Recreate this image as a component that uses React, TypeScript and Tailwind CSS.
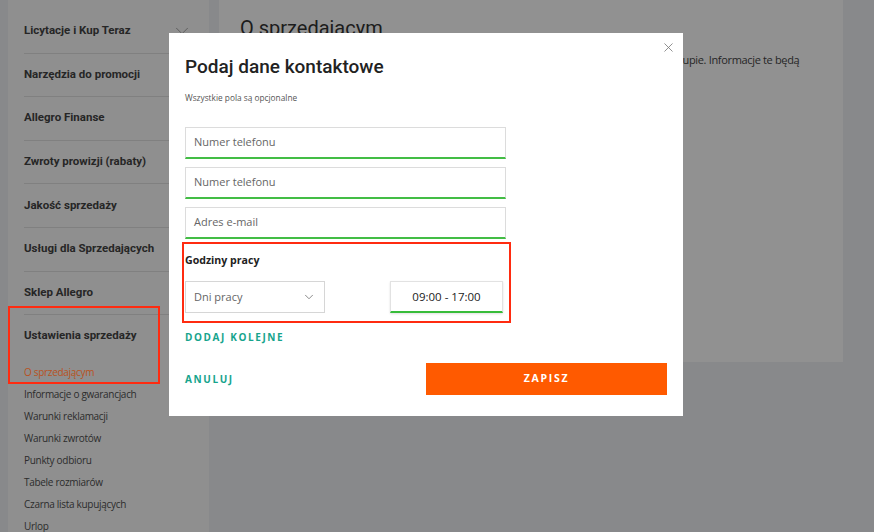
import { ChevronDown, X } from 'lucide-react';

const sections = [
  'Licytacje i Kup Teraz',
  'Narzędzia do promocji',
  'Allegro Finanse',
  'Zwroty prowizji (rabaty)',
  'Jakość sprzedaży',
  'Usługi dla Sprzedających',
  'Sklep Allegro',
];

const subLinks = [
  'Informacje o gwarancjach',
  'Warunki reklamacji',
  'Warunki zwrotów',
  'Punkty odbioru',
  'Tabele rozmiarów',
  'Czarna lista kupujących',
  'Urlop',
];

function Field({ placeholder }: { placeholder: string }) {
  return (
    <div className="h-[32px] border border-[#dcdcdc] border-b-2 border-b-[#43bd45] flex items-center px-[8px] text-[11px] text-[#666]">
      {placeholder}
    </div>
  );
}

export default function App() {
  return (
    <div
      className="relative w-[874px] h-[532px] overflow-hidden bg-[#88898b] flex items-start"
      style={{ fontFamily: '"Open Sans", sans-serif' }}
    >
      {/* sidebar */}
      <aside className="ml-2 w-[201px] h-[532px] bg-[#8f8f8f] px-4 pt-[10px] flex flex-col">
        {sections.map((s, i) => (
          <div
            key={s}
            className="h-[43.6px] shrink-0 border-b border-[#808080] flex items-center justify-between pb-[1px]"
          >
            <span className="font-['Roboto'] font-bold text-[11.5px] text-[#262626]">{s}</span>
            {i === 0 && <ChevronDown className="w-[22px] h-[22px] text-[#5a5a5a]" strokeWidth={1} />}
          </div>
        ))}
        <div className="h-[46px] shrink-0 flex items-center pb-[5px]">
          <span className="font-['Roboto'] font-bold text-[11.5px] text-[#262626]">Ustawienia sprzedaży</span>
        </div>
        <div className="flex flex-col tracking-[-0.3px]">
          <div className="h-[22px] flex items-center text-[10px] text-[#b8521e]">O sprzedającym</div>
          {subLinks.map((l) => (
            <div key={l} className="h-[22px] flex items-center text-[10px] text-[#2c2c2c]">
              {l}
            </div>
          ))}
        </div>
      </aside>

      {/* main panel */}
      <main className="ml-[10px] w-[624px] h-[362px] bg-[#919191] pl-[21px] pt-[14px]">
        <h2 className="font-['Roboto'] text-[20px] leading-[28px] text-[#1c1c1c]">O sprzedającym</h2>
        <p className="mt-[10px] text-[11px] tracking-[-0.335px] whitespace-nowrap text-[#262626]">
          Podaj tutaj dane kontaktowe, które kupujący zobaczy już w zakładce na swojej stronie po zakupie. Informacje te będą
        </p>
      </main>

      {/* annotation on sidebar */}
      <div className="absolute left-[8px] top-[306px] w-[152px] h-[78px] border-2 border-[#ff2b10]" />

      {/* modal */}
      <div className="absolute left-[169px] top-[33px] w-[514px] h-[383px] bg-white px-4 pt-[22px]">
        <button className="absolute right-[7px] top-[7px] text-[#777]">
          <X className="w-[15px] h-[15px]" strokeWidth={1.3} />
        </button>
        <h1 className="font-['Roboto'] font-medium text-[19px] leading-[24px] text-[#222]">
          Podaj dane kontaktowe
        </h1>
        <p className="mt-[14px] text-[8.3px] leading-[10px] text-[#555]">Wszystkie pola są opcjonalne</p>

        <div className="mt-[24px] w-[321px] flex flex-col gap-[8px]">
          <Field placeholder="Numer telefonu" />
          <Field placeholder="Numer telefonu" />
          <Field placeholder="Adres e-mail" />
        </div>

        <div className="relative mt-[3px] w-[321px] pt-[11px]">
          <div className="absolute -left-[3px] top-0 w-[329px] h-[81px] border-2 border-[#ff2b10]" />
          <div className="text-[10.6px] font-bold text-[#222] leading-[14px]">Godziny pracy</div>
          <div className="mt-[14px] flex justify-between pr-[3px]">
            <div className="w-[140px] h-[32px] border border-[#d6d6d6] flex items-center justify-between px-[8px] text-[11px] text-[#666]">
              Dni pracy
              <ChevronDown className="w-[14px] h-[14px] text-[#666]" strokeWidth={1.3} />
            </div>
            <div className="w-[113px] h-[32px] border border-[#e2e2e2] border-b-2 border-b-[#37bc3a] shadow-[0_1px_2px_rgba(0,0,0,0.12)] flex items-center justify-center text-[11.5px] text-[#222]">
              09:00 - 17:00
            </div>
          </div>
        </div>

        <div className="mt-[17px] text-[10px] font-bold tracking-[0.16em] text-[#16a48d] leading-[14px]">
          DODAJ KOLEJNE
        </div>

        <div className="mt-[19px] flex items-center justify-between">
          <span className="text-[10px] font-bold tracking-[0.16em] text-[#16a48d]">ANULUJ</span>
          <button className="w-[241px] h-[32px] bg-[#ff5a00] text-white text-[10.5px] font-bold tracking-[0.16em]">
            ZAPISZ
          </button>
        </div>
      </div>
    </div>
  );
}
